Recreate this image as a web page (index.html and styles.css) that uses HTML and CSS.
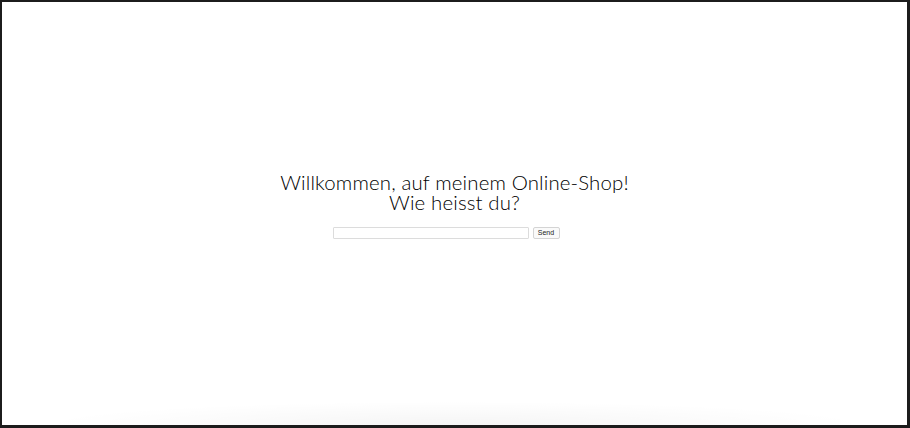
FILE: index.html
```html
<!DOCTYPE html>
<html lang="de">
<head>
<meta charset="utf-8">
<title>Online-Shop</title>
<link rel="stylesheet" href="styles.css">
</head>
<body>
<div class="frame">
  <main class="welcome">
    <h1 class="title">Willkommen, auf meinem Online-Shop!<br>Wie heisst du?</h1>
    <form class="name-form">
      <input class="name-input" type="text">
      <button class="send-btn" type="button">Send</button>
    </form>
  </main>
  <div class="floor"></div>
</div>
</body>
</html>
```

FILE: styles.css
```css
html, body {
  margin: 0;
  padding: 0;
  height: 100%;
  background: #fff;
}
.frame {
  box-sizing: border-box;
  height: 428px;
  width: 910px;
  border-style: solid;
  border-color: #1c1c1c;
  border-width: 2px 3px 3px 2px;
  display: flex;
  flex-direction: column;
  align-items: center;
  justify-content: center;
  position: relative;
  background: #fff;
}
.welcome {
  display: flex;
  flex-direction: column;
  align-items: center;
  margin-top: -16px;
}
.title {
  margin: 0;
  font-family: Lato, "Liberation Sans", sans-serif;
  font-weight: 300;
  font-size: 20.4px;
  line-height: 20px;
  color: #000;
  text-align: center;
  letter-spacing: 0.15px;
}
.name-form {
  display: flex;
  gap: 4px;
  margin-top: 15px;
  margin-right: 17px;
}
.name-input {
  box-sizing: border-box;
  width: 196px;
  height: 12px;
  border: 1px solid #dcdcdc;
  border-radius: 1px;
  padding: 0;
  margin: 0;
  background: #fff;
}
.send-btn {
  box-sizing: border-box;
  width: 27px;
  height: 12px;
  padding: 0;
  margin: 0;
  font-family: "Liberation Sans", Arial, sans-serif;
  font-size: 7px;
  line-height: 10px;
  color: #222;
  background: #fafafa;
  border: 1px solid #d4d4d4;
  border-radius: 2px;
}
.floor {
  position: absolute;
  left: 30px;
  right: 30px;
  bottom: 0;
  height: 24px;
  background: radial-gradient(ellipse at 50% 100%, rgba(0,0,0,0.04), rgba(0,0,0,0) 70%);
  pointer-events: none;
}
```
